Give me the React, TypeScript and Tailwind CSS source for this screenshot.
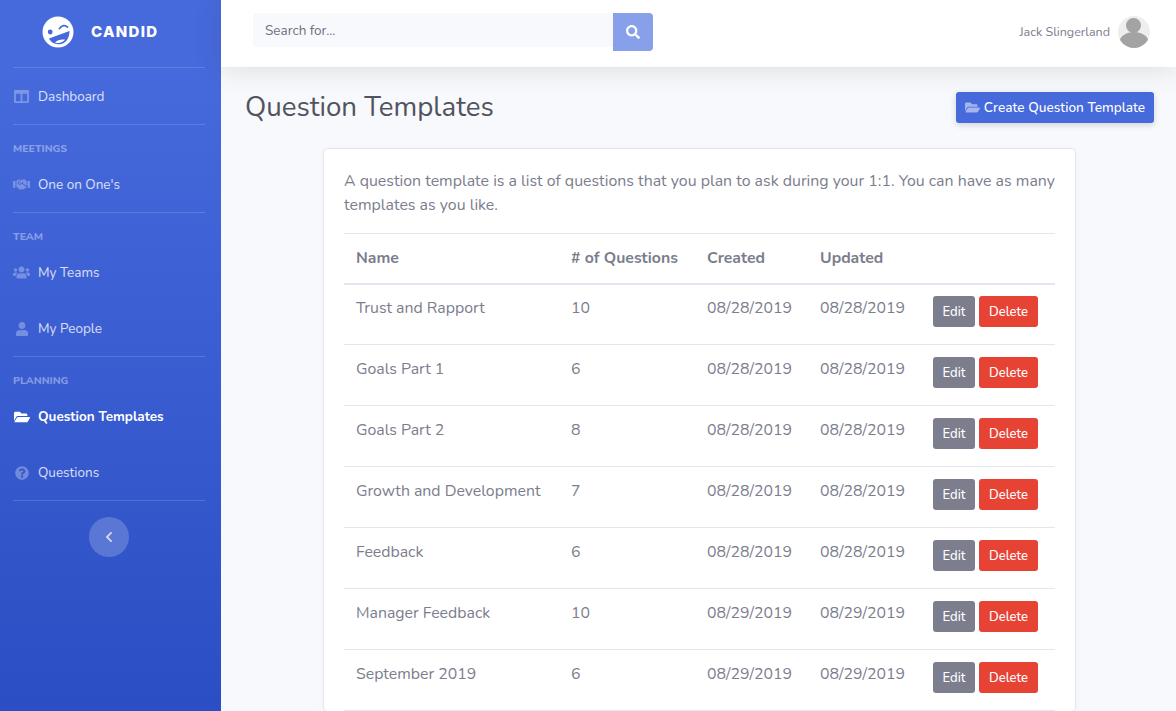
import { FaChevronLeft, FaColumns, FaFolderOpen, FaHandshake, FaQuestionCircle, FaSearch, FaUser, FaUsers } from "react-icons/fa";
import type { IconType } from "react-icons";

const rows = [
  ["Trust and Rapport", "10", "08/28/2019"],
  ["Goals Part 1", "6", "08/28/2019"],
  ["Goals Part 2", "8", "08/28/2019"],
  ["Growth and Development", "7", "08/28/2019"],
  ["Feedback", "6", "08/28/2019"],
  ["Manager Feedback", "10", "08/29/2019"],
  ["September 2019", "6", "08/29/2019"],
];

function Logo() {
  return (
    <svg width="32" height="32" viewBox="0 0 32 32" className="shrink-0">
      <circle cx="16" cy="16" r="15.5" fill="#fff" />
      <circle cx="8.2" cy="16" r="2.4" fill="#4669dc" />
      <path d="M17.5 12.5 Q21.5 7.5 25.5 11" fill="none" stroke="#4669dc" strokeWidth="1.8" strokeLinecap="round" />
      <path d="M7 22.5 L27.5 15 C27.5 22 24 27 19 28 C13 29 9 26.5 7 22.5 Z" fill="#4669dc" />
      <path d="M13 26.5 C15 24 19 23 23 23.5 C21 26.5 17 28 13 26.5 Z" fill="#fff" />
    </svg>
  );
}

function NavItem({ icon: Icon, label, active, size = 15 }: { icon: IconType; label: string; active?: boolean; size?: number }) {
  return (
    <a className={`flex h-14 items-center gap-2 pt-[2px] pl-[13px] text-[13.5px] ${active ? "font-bold text-white" : "text-white/80"}`}>
      <span className={`-mt-px flex w-[17px] justify-center ${active ? "text-white" : "text-white/30"}`}>
        <Icon size={size} />
      </span>
      {label}
    </a>
  );
}

function NavHeading({ label }: { label: string }) {
  return <div className="mt-4 h-[15px] pl-[13px] text-[10.5px] leading-4 font-extrabold text-white/40 uppercase">{label}</div>;
}

function Divider() {
  return <hr className="mr-4 ml-[13px] border-t border-white/15" />;
}

function Sidebar() {
  return (
    <aside className="flex h-full w-[221px] shrink-0 flex-col bg-[linear-gradient(180deg,#4669dc_10%,#2b4ec4_100%)]">
      <div className="flex h-[67px] items-center gap-[17px] pb-[3px] pl-[42px]">
        <Logo />
        <span className="text-[15px] font-extrabold tracking-[1.3px] text-white" style={{ fontFamily: "Inter, sans-serif" }}>
          CANDID
        </span>
      </div>
      <Divider />
      <NavItem icon={FaColumns} label="Dashboard" />
      <Divider />
      <NavHeading label="Meetings" />
      <NavItem icon={FaHandshake} label="One on One's" size={17} />
      <Divider />
      <NavHeading label="Team" />
      <NavItem icon={FaUsers} label="My Teams" size={17} />
      <NavItem icon={FaUser} label="My People" size={14} />
      <Divider />
      <NavHeading label="Planning" />
      <NavItem icon={FaFolderOpen} label="Question Templates" active size={16} />
      <NavItem icon={FaQuestionCircle} label="Questions" size={14} />
      <Divider />
      <button className="mt-4 ml-[89px] flex size-10 items-center justify-center rounded-full bg-white/20 text-white/70">
        <FaChevronLeft size={12} />
      </button>
    </aside>
  );
}

function Topbar() {
  return (
    <header className="relative z-10 flex h-[67px] shrink-0 items-center justify-between bg-white pr-[26px] pb-[3px] pl-8 shadow-[0_2px_28px_rgba(58,59,69,0.15)]">
      <div className="flex items-start">
        <input
          placeholder="Search for..."
          className="h-[34px] w-[360px] rounded-l bg-[#f8f9fc] px-3 text-[13.5px] text-[#7b7d8d] placeholder:text-[#6e707e]"
        />
        <button className="flex h-[38px] w-10 items-center justify-center rounded-r bg-[#87a0e9] text-white">
          <FaSearch size={14} />
        </button>
      </div>
      <div className="flex items-center gap-[8px]">
        <span className="text-[12.5px] text-[#7b7d8d]">Jack Slingerland</span>
        <svg width="32" height="32" viewBox="0 0 32 32">
          <defs>
            <clipPath id="avatar">
              <circle cx="16" cy="16" r="16" />
            </clipPath>
          </defs>
          <g clipPath="url(#avatar)">
            <rect width="32" height="32" fill="#eeeeee" />
            <circle cx="15.5" cy="9.5" r="7.5" fill="#a3a3a3" />
            <ellipse cx="16" cy="26" rx="14.5" ry="10" fill="#a3a3a3" />
          </g>
        </svg>
      </div>
    </header>
  );
}

function TemplateTable() {
  return (
    <table className="w-full table-fixed border-collapse text-[15.85px] text-[#7b7d8d]">
      <colgroup>
        <col className="w-[215px]" />
        <col className="w-[136px]" />
        <col className="w-[113px]" />
        <col className="w-[113px]" />
        <col />
      </colgroup>
      <thead>
        <tr className="h-[50px] border-t border-b-2 border-t-[#e3e6f0] border-b-[#e3e6f0] text-left text-[15.8px]">
          <th className="px-3 pt-[2px] font-bold">Name</th>
          <th className="px-3 pt-[2px] font-bold">
            <span className="whitespace-nowrap"># of Questions</span>
          </th>
          <th className="px-3 pt-[2px] font-bold">Created</th>
          <th className="px-3 pt-[2px] font-bold">Updated</th>
          <th />
        </tr>
      </thead>
      <tbody>
        {rows.map(([name, count, date]) => (
          <tr key={name} className="group h-[61px] border-b border-[#e3e6f0] align-top">
            <td className="px-3 pt-3 leading-6 whitespace-nowrap group-first:pt-[11px]">{name}</td>
            <td className="px-3 pt-3 leading-6 group-first:pt-[11px]">{count}</td>
            <td className="px-3 pt-3 leading-6 whitespace-nowrap group-first:pt-[11px]">{date}</td>
            <td className="px-3 pt-3 leading-6 whitespace-nowrap group-first:pt-[11px]">{date}</td>
            <td className="px-3 pt-3 group-first:pt-[11px]">
              <div className="flex gap-1">
                <button className="h-[31px] w-[42px] rounded-[3px] bg-[#7c7e8e] pt-[3px] text-[13px] font-medium text-white">Edit</button>
                <button className="h-[31px] w-[59px] rounded-[3px] bg-[#e74335] pt-[3px] text-[13px] font-medium text-white">Delete</button>
              </div>
            </td>
          </tr>
        ))}
      </tbody>
    </table>
  );
}

export default function App() {
  return (
    <div className="flex h-screen overflow-hidden bg-[#f8f9fc] font-['Nunito','Lato','Noto_Sans',sans-serif]">
      <Sidebar />
      <main className="flex min-w-0 flex-1 flex-col">
        <Topbar />
        <div className="min-h-0 flex-1 overflow-hidden">
          <div className="flex h-[81px] items-center justify-between pr-[22px] pl-6">
            <h1 className="-mt-[2px] text-[27.7px] leading-8 font-normal text-[#51535f]">Question Templates</h1>
            <button className="flex h-[31px] w-[198px] items-center justify-center gap-1 rounded-[3px] bg-[#4669dc] pt-[2px] text-[13.65px] font-medium text-white shadow-[0_2px_6px_rgba(58,59,69,0.2)]">
              <FaFolderOpen size={15} className="-mt-[2px] text-white/50" />
              Create Question Template
            </button>
          </div>
          <section className="ml-[102px] w-[753px] rounded-[5px] border border-[#e3e6f0] bg-white px-5 pt-5 shadow-[0_1px_6px_rgba(58,59,69,0.04)]">
            <p className="mb-4 text-[15.9px] leading-[24px] text-[#7b7d8d]">
              A question template is a list of questions that you plan to ask during your 1:1. You can have as many templates as you like.
            </p>
            <TemplateTable />
          </section>
        </div>
      </main>
    </div>
  );
}
